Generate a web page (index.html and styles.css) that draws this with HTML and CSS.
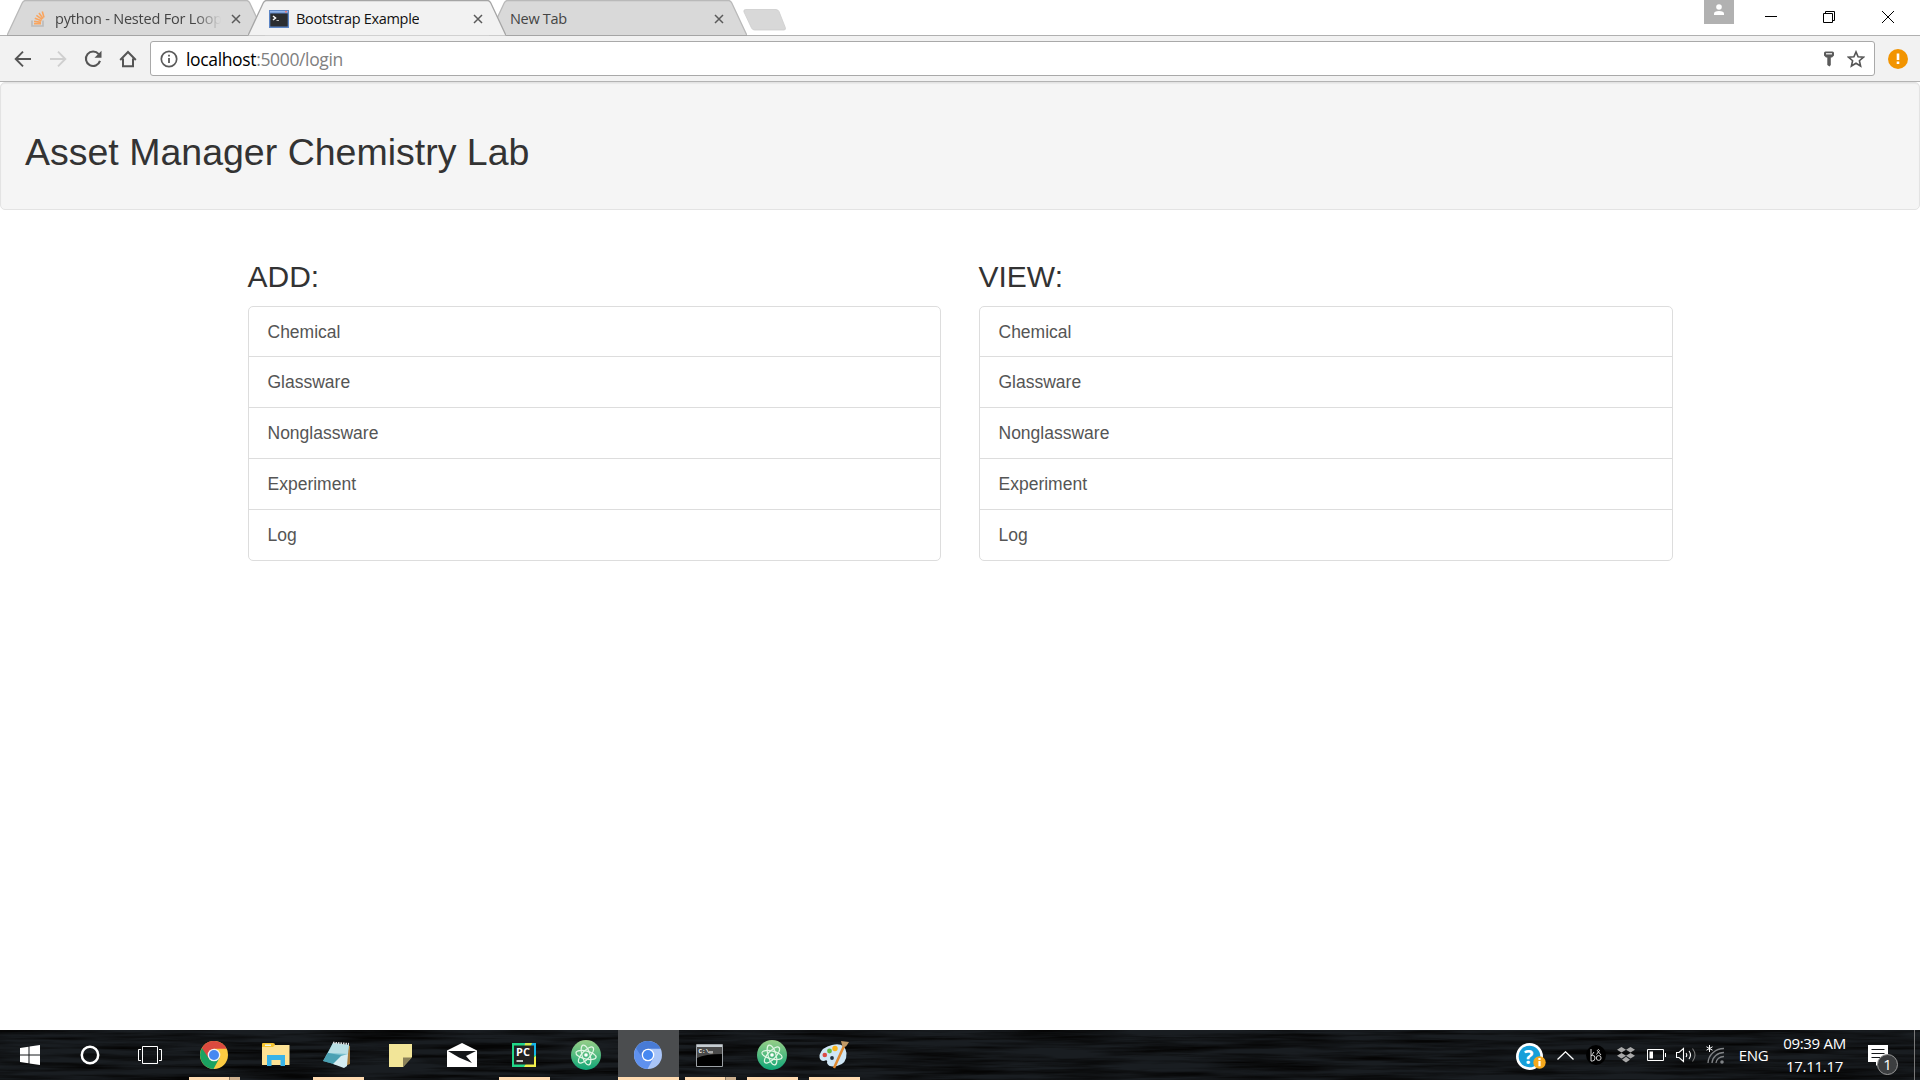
FILE: index.html
```html
<!DOCTYPE html>
<html lang="en">
<head>
<meta charset="utf-8">
<title>Bootstrap Example</title>
<link rel="stylesheet" href="styles.css">
</head>
<body>
<svg class="defs" width="0" height="0">
  <defs>
    <linearGradient id="atomFill" x1="0" y1="0" x2="0" y2="1"><stop offset="0" stop-color="#98cf88"/><stop offset="1" stop-color="#0fa677"/></linearGradient>
    <symbol id="atom" viewBox="0 0 30 30">
      <circle cx="15" cy="15" r="15" fill="url(#atomFill)"/>
      <g fill="none" stroke="#e2f6e5" stroke-width="1.2">
        <ellipse cx="15" cy="15" rx="10.3" ry="4" transform="rotate(13 15 15)"/>
        <ellipse cx="15" cy="15" rx="10.3" ry="4" transform="rotate(73 15 15)"/>
        <ellipse cx="15" cy="15" rx="10.3" ry="4" transform="rotate(133 15 15)"/>
      </g>
      <circle cx="15" cy="15" r="1.8" fill="#fff"/>
    </symbol>
    <symbol id="tabshape" viewBox="0 0 258 36">
      <path d="M0 35.5 L15.2 3 Q16.4.5 18.5.5 H239.5 Q241.6.5 242.8 3 L258 35.5" stroke-width="1.3"/>
    </symbol>
    <symbol id="cross" viewBox="0 0 10 10"><path d="M1 1 9 9M9 1 1 9" fill="none" stroke="#5a5a5a" stroke-width="1.5"/></symbol>
  </defs>
</svg>

<header class="browser">
  <div class="tabstrip">
    <div class="tab">
      <svg class="tab-bg"><use href="#tabshape"/></svg>
      <svg class="favicon so" width="14" height="16" viewBox="0 0 14 16"><path d="M1 9.5V15H12V9.5" fill="none" stroke="#bcbbbb" stroke-width="1.7"/><path d="M3 12.6H10M3.1 10.3 10 11.3M3.8 7.3 10.5 9.8M5.4 4.3 11.2 8.4M8 2 12 7.6M11.3.5 13 6.5" stroke="#f9a55f" stroke-width="1.6" fill="none"/></svg>
      <span class="tab-title fade t1">python - Nested For Loop</span>
      <svg class="tab-close" width="10" height="10"><use href="#cross"/></svg>
    </div>
    <div class="tab active">
      <svg class="tab-bg"><use href="#tabshape"/></svg>
      <svg class="favicon" width="20" height="18" viewBox="0 0 20 18"><rect width="20" height="18" fill="#5c85c5"/><path d="M1 1H19V2.5H1Z" fill="#94b5e7"/><circle cx="17" cy="1.8" r="1" fill="#e77"/><rect x="1.3" y="3.5" width="17.4" height="13" fill="#2b2d30"/><path d="M4 6 6.500 8 4 10" stroke="#fff" stroke-width="1.5" fill="none"/><path d="M7.5 10.500H10" stroke="#bbb"/></svg>
      <span class="tab-title t2">Bootstrap Example</span>
      <svg class="tab-close" width="10" height="10"><use href="#cross"/></svg>
    </div>
    <div class="tab">
      <svg class="tab-bg"><use href="#tabshape"/></svg>
      <span class="tab-title t3">New Tab</span>
      <svg class="tab-close" width="10" height="10"><use href="#cross"/></svg>
    </div>
    <svg class="newtab" width="44" height="22" viewBox="0 0 44 22"><path d="M3 .5H33Q35 .5 36 2.5L42.3 18.5Q43 21 41 21H11.500Q9.500 21 8.500 19L1 3Q0 .5 3 .5Z" fill="#d8d8d8" stroke="#cdcdcd" stroke-width=".8"/></svg>
    <div class="window-controls">
      <div class="profile"><svg width="12" height="12" viewBox="0 0 12 12" fill="#fff"><circle cx="6" cy="3" r="2.8"/><path d="M1 11V9.500Q1 7 6 7T11 9.500V11Z"/></svg></div>
      <svg width="12" height="12" class="wc"><path d="M0 5.500H12" stroke="#000"/></svg>
      <svg width="12" height="12" class="wc" fill="none" stroke="#000"><path d="M.5 2.500H9.500V11.500H.5ZM2.500 2.500V.5H11.500V9.500H9.500"/></svg>
      <svg width="12" height="12" class="wc" stroke="#000"><path d="M0 0 12 12M12 0 0 12"/></svg>
    </div>
  </div>
  <div class="toolbar">
    <div class="nav"><svg width="18" height="18" viewBox="0 0 18 18" fill="none" stroke="#555" stroke-width="1.9"><path d="M17 9H2M9 1.700 1.700 9 9 16.300"/></svg></div>
    <div class="nav"><svg width="18" height="18" viewBox="0 0 18 18" fill="none" stroke="#cfcfcf" stroke-width="1.900"><path d="M1 9H16M9 1.700 16.300 9 9 16.300"/></svg></div>
    <div class="nav"><svg width="18" height="18" viewBox="0 0 18 18"><path d="M14.700 4.200A7.200 7.200 0 1 0 16 10.900" fill="none" stroke="#555" stroke-width="2.100"/><path d="M17.500.8V7.800H10.500Z" fill="#555"/></svg></div>
    <div class="nav"><svg width="18" height="18" viewBox="0 0 18 18" fill="none" stroke="#555" stroke-width="2"><path d="M1.200 10 9 2 16.800 10M4 8.500V16.200H14V8.500"/></svg></div>
    <div class="omnibox">
      <svg width="18" height="18" viewBox="0 0 18 18"><circle cx="9" cy="9" r="7.700" fill="none" stroke="#5a5a5a" stroke-width="1.700"/><path d="M8.100 7.900H9.900V13H8.100ZM8.100 4.800H9.900V6.500H8.100Z" fill="#5a5a5a"/></svg>
      <span class="url"><b>localhost</b>:5000/login</span>
      <svg class="key" width="12" height="16" viewBox="0 0 12 16"><path d="M1 2Q1 .5 2.500.5H9.500Q11 .5 11 2V4.500L9 6.500H7.800V14L6.500 15.500 4.300 14V6.500H3L1 4.500Z" fill="#5a5a5a"/><path d="M3 2H9V3.500H3Z" fill="#ddd"/></svg>
      <svg width="18" height="18" viewBox="0 0 18 18"><path d="M9 1.900 11.100 6.700 16.500 7.200 12.400 10.700 13.600 16 9 13.200 4.400 16 5.600 10.700 1.500 7.200 6.900 6.700Z" fill="none" stroke="#555" stroke-width="1.600"/></svg>
    </div>
    <svg class="alert" width="20" height="20"><circle cx="10" cy="10" r="10" fill="#f29400"/><path d="M8.700 4.500H11.300V11H8.700ZM8.700 12.600H11.300V15H8.700Z" fill="#fff"/></svg>
  </div>
</header>

<main class="page">
  <div class="well"><h1>Asset Manager Chemistry Lab</h1></div>
  <div class="container">
    <section>
      <h2>ADD:</h2>
      <ul class="list"><li>Chemical</li><li>Glassware</li><li>Nonglassware</li><li>Experiment</li><li>Log</li></ul>
    </section>
    <section>
      <h2>VIEW:</h2>
      <ul class="list"><li>Chemical</li><li>Glassware</li><li>Nonglassware</li><li>Experiment</li><li>Log</li></ul>
    </section>
  </div>
</main>

<footer class="taskbar">
  <svg class="wood" width="1920" height="50"><filter id="grain" x="0" y="0" width="100%" height="100%" color-interpolation-filters="sRGB"><feTurbulence type="fractalNoise" baseFrequency=".009 .2" numOctaves="4" seed="4"/><feColorMatrix values="0 0 0 0 .02  0 0 0 0 .02  0 0 0 0 .02  2.200 0 0 0 -.75"/></filter><rect width="1920" height="50" filter="url(#grain)"/></svg>
  <div class="sys"><svg width="20" height="20" viewBox="0 0 20 20" fill="#fff"><path d="M0 3 8.500 1.700V9.500H0ZM9.500 1.500 20 0V9.500H9.500ZM0 10.500H8.500V18.300L0 17ZM9.500 10.500H20V20L9.500 18.500Z"/></svg></div>
  <div class="sys"><svg width="20" height="20"><circle cx="10" cy="10" r="8.200" fill="none" stroke="#fff" stroke-width="2.500"/></svg></div>
  <div class="sys"><svg width="24" height="18" fill="none" stroke="#fff"><path d="M4.500.5H19.500V17.500H4.500ZM3 3.500H.5V14.500H3M21 3.500H23.500V14.500H21"/></svg></div>
  <div class="apps">
    <div class="app run multi"><svg width="28" height="28" viewBox="0 0 28 28"><circle cx="14" cy="14" r="14" fill="#fccb42"/><path d="M14 14 1.900 7A14 14 0 0 0 13.500 28L19.500 17Z" fill="#1ba261"/><path d="M14 7.800H26.600A14 14 0 0 0 1.900 7L8.500 17Z" fill="#db4a3f"/><circle cx="14" cy="14" r="6.300" fill="#f3f3f3"/><circle cx="14" cy="14" r="5" fill="#4688f1"/></svg></div>
    <div class="app"><svg width="28" height="24" viewBox="0 0 28 24"><path d="M0 1Q0 0 1 0H11Q13 0 13 2V4H0Z" fill="#f7c530"/><path d="M3 1.500H9V3H3Z" fill="#e9f6ef"/><path d="M0 4H11L13 2H27.500V22H0Z" fill="#fee294"/><path d="M5 23V12H23V23H18.500V17H9.500V23Z" fill="#38b3e8"/></svg></div>
    <div class="app run pad"><svg width="28" height="28" viewBox="0 0 28 28"><path d="M23 3.500 27 5 27 23 22 25Z" fill="#a67a3a"/><path d="M10 2 26 4 22 26 0 20Z" fill="#79c0cd"/><path d="M10 2 26 4 25 13 5 12Z" fill="#b9dfe4"/><path d="M5 12 22 15 14 24 0 20Z" fill="#3f98ac" opacity=".8"/><path d="M18 15 25 13 24 25 21 27 10 23Z" fill="#d6edf1"/><path d="M10 1.800 26 3" stroke="#ddd" stroke-width="2.200" stroke-dasharray="1.500 1"/></svg></div>
    <div class="app"><svg width="23" height="23"><path d="M0 0H23V13L14 23H0Z" fill="#f2e598"/><path d="M14 13.500H23L14 23Z" fill="#8a8059"/></svg></div>
    <div class="app"><svg width="30" height="24" viewBox="0 0 30 24"><path d="M0 7.500 15 0 30 7.500V24H0Z" fill="#fff"/><path d="M1 8H29L19 13 25 20 12 14.500Z" fill="#14171a"/></svg></div>
    <div class="app run"><svg width="24" height="24" viewBox="0 0 24 24"><rect width="24" height="24" fill="#21d789"/><path d="M12 0H24V12H16Z" fill="#16b6e8"/><path d="M13 0H20L18 5H12Z" fill="#d4e84a"/><path d="M24 13V24H12L15 19Z" fill="#f2ef4a"/><rect x="2" y="2.500" width="20" height="19" fill="#222"/><text x="4" y="13.300" class="pc">PC</text><path d="M4.500 18H11" stroke="#fff" stroke-width="1.500"/></svg></div>
    <div class="app"><svg width="30" height="30"><use href="#atom"/></svg></div>
    <div class="app run current"><svg width="28" height="28" viewBox="0 0 28 28"><circle cx="14" cy="14" r="14" fill="#a9c5f8"/><path d="M14 14 1.900 7A14 14 0 0 0 13.500 28L19.500 17Z" fill="#5f91ee"/><path d="M14 7.800H26.600A14 14 0 0 0 1.900 7L8.500 17Z" fill="#487bd6"/><circle cx="14" cy="14" r="6.300" fill="#fff"/><circle cx="14" cy="14" r="5" fill="#4688f1"/></svg></div>
    <div class="app run multi pad"><svg width="27" height="23" viewBox="0 0 27 23"><path d="M.5.500H26.500V22.500H.5Z" fill="#000" stroke="#9ca1a5"/><path d="M1 1H26V3H1Z" fill="#c6cdd2"/><path d="M1 3H26V10Q9 10 1 14Z" fill="#4a4a4a"/><text x="2.500" y="8.500" class="cmd">C:\_</text><path d="M13 8H17" stroke="#fff"/></svg></div>
    <div class="app run"><svg width="30" height="30"><use href="#atom"/></svg></div>
    <div class="app run"><svg width="30" height="28" viewBox="0 0 30 28"><path d="M13 4Q26 1 27.500 12 28 23 18 25 10 27 8 22 9 18 5 20 0 20 .5 14 3 6 13 4Z" fill="#cfe6f5"/><circle cx="5.800" cy="14" r="2.300" fill="#dc4b45"/><circle cx="10.500" cy="10" r="2.400" fill="#65b946"/><circle cx="16" cy="7.500" r="2.700" fill="#fbb41b"/><circle cx="13" cy="17" r="1.900" fill="#20303e"/><path d="M25 5 15 27" stroke="#e08a31" stroke-width="2.500"/><path d="M22 0 30 1 27 5.500 23.500 6Z" fill="#c29a66"/></svg></div>
  </div>
  <div class="tray">
    <div class="cell help"><svg width="30" height="28" viewBox="0 0 30 28"><circle cx="13.500" cy="13.500" r="13.500" fill="#fff"/><circle cx="13.500" cy="13.500" r="10.800" fill="#169fd9"/><text x="8" y="21" class="q">?</text><circle cx="23.500" cy="19.500" r="6.200" fill="#f5a81c"/><path d="M22.400 18H24.600V23.200H22.400ZM22.400 15H24.600V17H22.400Z" fill="#fff"/></svg></div>
    <div class="cell"><svg width="17" height="9" fill="none" stroke="#fff" stroke-width="1.300"><path d="M.5 8.500 8.500.8 16.500 8.500"/></svg></div>
    <div class="cell bo"><svg width="20" height="20" viewBox="0 0 20 20"><circle cx="10" cy="10" r="10" fill="#000"/><g fill="none" stroke="#d5d5d5" stroke-width="1"><path d="M5 4V16H6.500Q9 16 9 13T6.500 10.500H5M5.500 10.500 8 7"/><circle cx="12.700" cy="13" r="2.400"/><path d="M15 10 11.300 5.500Q12.500 3.500 13.500 5.500L10.500 9.500"/></g></svg></div>
    <div class="cell"><svg width="18" height="16" viewBox="0 0 18 16" fill="#a9a9a9"><path d="M4.500 0 9 2.800 4.500 5.600 0 2.800ZM13.500 0 18 2.800 13.500 5.600 9 2.800ZM4.500 5.900 9 8.700 4.500 11.500 0 8.700ZM13.500 5.900 18 8.700 13.500 11.500 9 8.700ZM9 9.700 13 12.700 9 15.500 5 12.700Z"/></svg></div>
    <div class="cell"><svg width="19" height="12"><path d="M.5.500H16.500V11.500H.5ZM18.500 4V8" fill="none" stroke="#fff"/><path d="M2.500 2.500H6V9.500H2.500Z" fill="#fff"/></svg></div>
    <div class="cell"><svg width="21" height="16" viewBox="0 0 21 16" fill="none" stroke="#fff" stroke-width="1.100"><path d="M.5 5.500H3L7.500 1.500V14.500L3 10.500H.5ZM10 6Q11.500 8 10 10M13 4Q16 8 13 12"/><path d="M16.500 1.500Q21.500 8 16.500 14.500" stroke="#777"/></svg></div>
    <div class="cell"><svg width="19" height="20" viewBox="0 0 19 20"><g fill="none" stroke="#808386" stroke-width="1.300"><path d="M2 18A16 15 0 0 1 18 3.500M6 18A12 11 0 0 1 18 7.500M10 18A8 7 0 0 1 18 11.500"/></g><circle cx="16" cy="17" r="1.800" fill="#808386"/><path d="M3.500 0V7M.5 1.800 6.500 5.200M6.500 1.800.5 5.200" stroke="#fff"/></svg></div>
    <div class="cell lang">ENG</div>
    <div class="cell clock"><span>09:39 AM</span><span>17.11.17</span></div>
    <div class="cell notes"><svg width="32" height="32" viewBox="0 0 32 32"><path d="M0 1H20V18H12L8 22V18H0Z" fill="#fff"/><path d="M3.500 5.500H16.500M3.500 9.500H16.500M3.500 13.500H12" stroke="#15181b"/><circle cx="19.500" cy="20.500" r="10" fill="#3c3e40" stroke="#999"/><text x="15.300" y="26" class="badge">1</text></svg></div>
    <div class="peek"></div>
  </div>
</footer>
</body>
</html>
```
FILE: styles.css
```css
* { box-sizing: border-box; }
html, body { height: 100%; }
body {
  margin: 0;
  width: 1920px;
  height: 1080px;
  overflow: hidden;
  display: flex;
  flex-direction: column;
  background: #fff;
  font-family: "Open Sans", "Noto Sans", sans-serif;
}
svg { display: block; flex: none; }
.defs { position: absolute; }

/* browser frame */
.tabstrip {
  height: 36px;
  display: flex;
  padding-left: 7px;
  background: linear-gradient(#b0b0b0, #b0b0b0) 0 35px / 100% 1px no-repeat #fff;
}
.tab {
  position: relative;
  width: 258px;
  height: 36px;
  margin-right: -17px;
  padding: 2px 23px 0 24px;
  display: flex;
  align-items: center;
  flex: none;
}
.tab-bg {
  position: absolute;
  left: 0;
  top: 0;
  width: 258px;
  height: 36px;
  fill: #d9d9d9;
  stroke: #b9b9b9;
}
.tab:not(.active)::before {
  content: "";
  position: absolute;
  z-index: 1;
  left: 0;
  right: 0;
  bottom: 0;
  height: 1px;
  background: #a5a5a5;
}
.tab:first-child { padding-right: 24px; }
.active { z-index: 2; padding-left: 21px; }
.active .tab-bg { fill: #f2f2f2; stroke: #a5a5a5; }
.favicon, .tab-title, .tab-close { position: relative; }
.tab-title { font-size: 14.5px; color: #444; white-space: nowrap; overflow: hidden; line-height: 22px; letter-spacing: -.3px; }
.so { margin-right: 10px; }
.t1 { width: 166px; letter-spacing: -.2px; }
.fade { -webkit-mask-image: linear-gradient(90deg, #000 84%, transparent); mask-image: linear-gradient(90deg, #000 84%, transparent); }
.t2 { margin-left: 7px; color: #111; }
.t3 { margin-left: -3px; letter-spacing: -.3px; }
.tab-close { margin-left: auto; }
.newtab { margin: 9px 0 0 13px; }
.window-controls { margin-left: auto; display: flex; width: 216px; }
.profile {
  width: 30px;
  height: 24px;
  background: #b1b1b1;
  display: flex;
  justify-content: center;
  padding-top: 4px;
  margin-right: 31px;
}
.wc { margin: 11px 46px 0 0; }
.wc:nth-last-child(2) { margin-right: 47px; }
.wc:last-child { margin-right: 0; }
.toolbar {
  height: 46px;
  background: #f2f2f2;
  border-bottom: 1px solid #b3b3b3;
  display: flex;
  align-items: center;
  padding: 0 12px 0 5px;
}
.nav { width: 35px; display: flex; justify-content: center; }
.omnibox {
  flex: 1;
  height: 35px;
  margin: 0 13px 0 5px;
  border: 1px solid #a9a9a9;
  border-radius: 3px;
  background: #fff;
  display: flex;
  align-items: center;
  padding: 0 9px 0 9px;
}
.url { margin-left: 8px; font-size: 17.5px; color: #808080; letter-spacing: -.35px; line-height: 24px; }
.url b { font-weight: 400; color: #000; }
.key { margin-left: auto; margin-right: 12px; }

/* page */
.page { flex: 1; font-family: "Liberation Sans", Arial, sans-serif; color: #333; }
.well {
  height: 128px;
  padding: 44px 24px 0;
  border: 1px solid #e3e3e3;
  border-radius: 5px;
  background: #f5f5f5;
  box-shadow: inset 0 1px 1px rgba(0, 0, 0, .05);
}
h1 { margin: 0; font-size: 37.5px; font-weight: 400; line-height: 50px; }
.container {
  width: 1425px;
  margin: 48px 0 0 248px;
  display: grid;
  grid-template-columns: 693px 694px;
  column-gap: 38px;
}
h2 { margin: 0 0 11px -.5px; font-size: 30px; font-weight: 400; line-height: 37px; }
.list { list-style: none; margin: 0; padding: 0; border: 1px solid #ddd; border-radius: 5px; }
.list li { height: 51px; padding: 0 18.500px; font-size: 17.5px; line-height: 50px; color: #555; border-bottom: 1px solid #ddd; }
.list li:first-child { height: 50px; }
.list li:last-child { height: 50px; border-bottom: 0; }

/* taskbar */
.taskbar { position: relative; height: 50px; background: #191d21; display: flex; color: #fff; overflow: hidden; }
.wood { position: absolute; left: 0; top: 0; }
.sys, .apps, .tray { position: relative; }
.sys { width: 60px; display: flex; align-items: center; justify-content: center; }
.apps { display: flex; margin-left: 3px; }
.app { position: relative; width: 62px; display: flex; align-items: center; justify-content: center; }
.run::after { content: ""; position: absolute; left: 6px; width: 51px; bottom: 0; height: 3px; background: #ffdbb1; }
.multi::after { background: linear-gradient(90deg, #ffdbb1 40px, #8c7962 40px 41px, #ccaf8e 41px); }
.pad { padding-right: 2px; }
.current { background: linear-gradient(#4b4d4f, #4b4d4f) 1px 0 / 61px 100% no-repeat; }
.current::after { left: 1px; width: 61px; }
.pc { font: 700 11px "Open Sans", sans-serif; fill: #fff; }
.cmd { font: 700 6px "Liberation Mono", monospace; fill: #fff; }
.q { font: 700 20px "Open Sans", sans-serif; fill: #fff; }
.badge { font: 15px "Open Sans", sans-serif; fill: #fff; }
.tray {
  margin-left: auto;
  display: grid;
  grid-template-columns: 36px 35px 28px 30px 31px 28px 30px 47px 75px 62px 6px;
}
.cell { display: flex; align-items: center; justify-content: center; }
.help { padding: 4px 0 0 2px; }
.bo { padding-right: 2px; }
.lang { font-size: 15px; letter-spacing: -.4px; }
.clock { flex-direction: column; font-size: 15px; line-height: 23px; letter-spacing: -.3px; white-space: nowrap; padding-bottom: 1px; }
.notes { padding: 9px 0 0 2px; }
.peek { border-left: 1px solid #777; }
```
